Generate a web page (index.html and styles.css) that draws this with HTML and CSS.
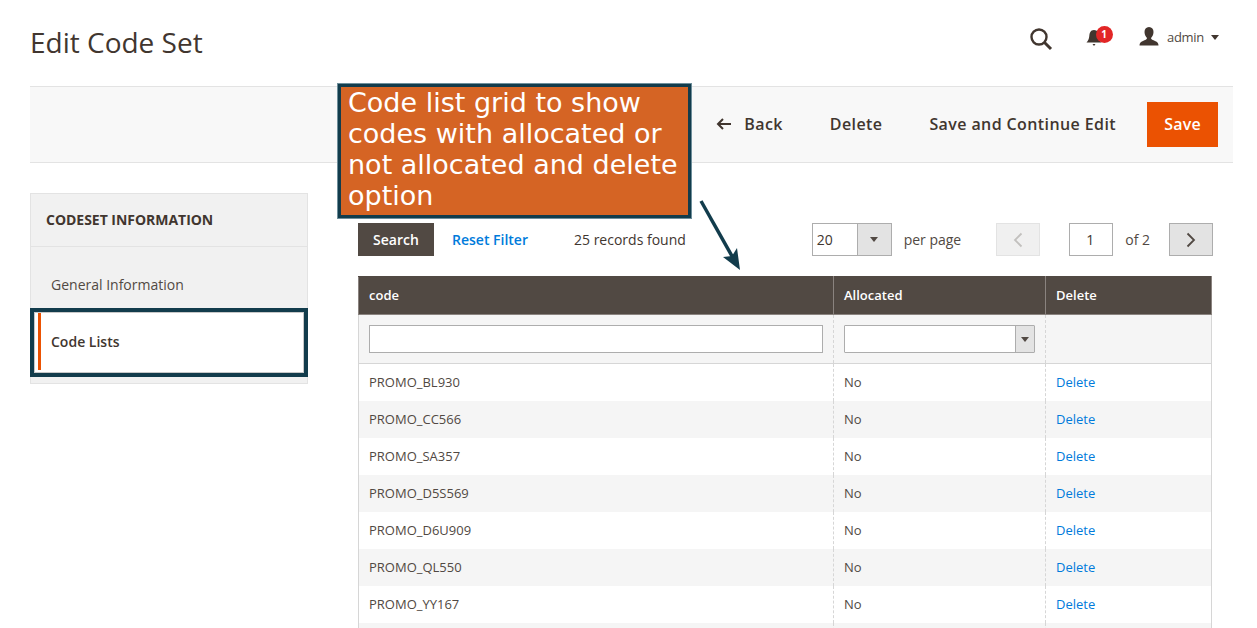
FILE: index.html
```html
<!DOCTYPE html>
<html lang="en">
<head>
	<title>Edit Code Set</title>
	<link rel="stylesheet" href="styles.css">
</head>
<body>
	<!-- Page header -->
	<header class="page-header">
		<h1>Edit Code Set</h1>
		<div class="actions-top">
			<svg class="icon-search" width="24" height="24" viewBox="0 0 24 24"><circle cx="10" cy="10" r="7.5" fill="none" stroke="#41362f" stroke-width="2.4"/><path d="M15.5 15.5 L22 22" stroke="#41362f" stroke-width="3" fill="none"/></svg>
			<div class="notify">
				<svg width="18" height="20" viewBox="0 0 18 20"><path d="M9 2 C5.5 2 4.5 5 4.3 8 C4.1 11 3 13 1.5 14.5 L16.5 14.5 C15 13 13.900 11 13.700 8 C13.500 5 12.500 2 9 2 Z M7.500 16 L10.500 16 L9 18 Z" fill="#41362f"/></svg>
				<span class="badge">1</span>
			</div>
			<div class="user">
				<svg width="20" height="20" viewBox="0 0 20 20"><path d="M10 0 C13 0 14.500 2.200 14.500 5 C14.500 8 13 10 12 11 C12 12.500 14 13 16 14 C18.500 15 19.500 16 19.500 18.500 L0.500 18.500 C0.500 16 1.500 15 4 14 C6 13 8 12.500 8 11 C7 10 5.500 8 5.500 5 C5.500 2.200 7 0 10 0 Z" fill="#41362f"/></svg>
				<span>admin</span>
				<i class="caret"></i>
			</div>
		</div>
	</header>

	<!-- Toolbar -->
	<div class="toolbar">
		<button type="button" class="tool-btn back"><svg width="16" height="12" viewBox="0 0 16 12"><path d="M15 6 H2 M7 1 L2 6 L7 11" fill="none" stroke="#41362f" stroke-width="2"/></svg>Back</button>
		<button type="button" class="tool-btn">Delete</button>
		<button type="button" class="tool-btn">Save and Continue Edit</button>
		<button type="button" class="save-btn">Save</button>
	</div>

	<div class="content">
		<aside class="sidebar">
			<div class="side-title">CODESET INFORMATION</div>
			<div class="side-item">General Information</div>
			<div class="side-active">
				<div class="side-active-label">Code Lists</div>
			</div>
		</aside>

		<main class="main">
			<div class="grid-controls">
				<button type="button" class="search-btn">Search</button>
				<a class="reset-link">Reset Filter</a>
				<span class="records">25 records found</span>
				<div class="pager">
					<div class="select-box">
						<span class="select-val">20</span>
						<span class="select-arrow"><i class="caret"></i></span>
					</div>
					<span class="per-page">per page</span>
					<button type="button" class="page-btn disabled"><svg width="10" height="16" viewBox="0 0 10 16"><path d="M8.500 1.500 L2 8 L8.500 14.500" fill="none" stroke="#c2c0be" stroke-width="1.800"/></svg></button>
					<div class="page-input">1</div>
					<span class="page-of">of 2</span>
					<button type="button" class="page-btn"><svg width="10" height="16" viewBox="0 0 10 16"><path d="M1.500 1.500 L8 8 L1.500 14.500" fill="none" stroke="#514943" stroke-width="1.800"/></svg></button>
				</div>
			</div>

			<table class="grid">
				<thead>
					<tr><th class="col-code">code</th><th class="col-alloc">Allocated</th><th>Delete</th></tr>
				</thead>
				<tbody>
					<tr class="filters">
						<td><div class="filter-input"></div></td>
						<td><div class="filter-select"><span class="filter-arrow"><i class="caret"></i></span></div></td>
						<td></td>
					</tr>
					<tr><td>PROMO_BL930</td><td>No</td><td><a>Delete</a></td></tr>
					<tr><td>PROMO_CC566</td><td>No</td><td><a>Delete</a></td></tr>
					<tr><td>PROMO_SA357</td><td>No</td><td><a>Delete</a></td></tr>
					<tr><td>PROMO_D5S569</td><td>No</td><td><a>Delete</a></td></tr>
					<tr><td>PROMO_D6U909</td><td>No</td><td><a>Delete</a></td></tr>
					<tr><td>PROMO_QL550</td><td>No</td><td><a>Delete</a></td></tr>
					<tr><td>PROMO_YY167</td><td>No</td><td><a>Delete</a></td></tr>
					<tr><td></td><td></td><td></td></tr>
				</tbody>
			</table>
		</main>
	</div>

	<!-- annotation laid over the page -->
	<div class="callout">Code list grid to show codes with allocated or not allocated and delete option</div>
	<svg class="arrow" width="44" height="74" viewBox="0 0 44 74"><path d="M2 2 L38 66" stroke="#123c4c" stroke-width="3.500" fill="none"/><path d="M41 71 L24 58 L33 57 L38 49 Z" fill="#123c4c"/></svg>
</body>
</html>
```

FILE: styles.css
```css
html {
	overflow: hidden;
}

body {
	margin: 0;
	height: 628px;
	overflow: hidden;
	font: normal 14px "Open Sans", sans-serif;
	color: #41362f;
	background: #fff;
	position: relative;
}

a {
	color: #007bdb;
}

button {
	font-family: "Open Sans", sans-serif;
	cursor: pointer;
}

.caret {
	display: block;
	width: 0;
	height: 0;
	border-left: 4.5px solid transparent;
	border-right: 4.5px solid transparent;
	border-top: 5px solid #514943;
}

/* header */
.page-header {
	height: 86px;
	box-sizing: border-box;
	padding: 0 38px 0 30px;
	display: flex;
	justify-content: space-between;
}

.page-header h1 {
	margin: 21px 0 0;
	font-size: 28px;
	font-weight: 400;
	line-height: 42px;
	color: #41362f;
}

.actions-top {
	display: flex;
	align-items: flex-start;
	padding-top: 26px;
}

.icon-search {
	margin: 1px 0 0 0;
}

.notify {
	position: relative;
	margin: 2px 0 0 32px;
	width: 18px;
	height: 20px;
}

.badge {
	position: absolute;
	left: 11px;
	top: -2px;
	width: 17px;
	height: 17px;
	border-radius: 50%;
	background: #e22626;
	color: #fff;
	font-size: 10px;
	font-weight: 700;
	line-height: 17px;
	text-align: center;
}

.user {
	display: flex;
	align-items: center;
	margin: 1px 0 0 36px;
	font-size: 13px;
	letter-spacing: -0.3px;
	color: #514943;
	height: 20px;
}

.user span {
	margin-left: 8.500px;
}

.user .caret {
	margin-left: 7px;
	border-top-color: #41362f;
}

/* toolbar */
.toolbar {
	margin: 0 24px 0 30px;
	height: 77px;
	box-sizing: border-box;
	background: #f8f8f8;
	border-top: 1px solid #e3e3e3;
	border-bottom: 1px solid #e3e3e3;
	padding: 0 15px 0 0;
	display: flex;
	justify-content: flex-end;
	align-items: center;
}

.tool-btn {
	background: none;
	border: none;
	padding: 0 0 2px;
	margin-right: 31px;
	font-size: 16px;
	font-weight: 600;
	color: #41362f;
	letter-spacing: 0.4px;
	display: flex;
	align-items: center;
}

.tool-btn.back svg {
	margin-right: 12px;
}

.tool-btn + .tool-btn {
	margin-left: 16px;
}

.save-btn {
	width: 71px;
	height: 45px;
	padding: 0 0 2px;
	background: #eb5202;
	border: none;
	color: #fff;
	font-size: 16px;
	font-weight: 600;
	letter-spacing: 0.2px;
}

/* content */
.content {
	display: flex;
	padding: 30px 0 0 30px;
}

.sidebar {
	width: 278px;
	height: 191px;
	box-sizing: border-box;
	margin-right: 50px;
	background: #f1f1f1;
	border: 1px solid #e3e3e3;
	flex-shrink: 0;
}

.side-title {
	height: 53px;
	box-sizing: border-box;
	padding-left: 15px;
	line-height: 52px;
	font-size: 14px;
	font-weight: 700;
	letter-spacing: -0.03px;
	color: #41362f;
	border-bottom: 1px solid #e3e3e3;
}

.side-item {
	height: 56px;
	padding: 9px 0 0 20px;
	line-height: 57px;
	font-size: 14px;
	color: #514943;
}

.side-active {
	height: 61px;
	box-sizing: border-box;
	margin: 0 3px;
	padding-left: 3px;
	background: #fff;
	border: 1px solid #c8c8c8;
	outline: 4px solid #123c4c;
}

.side-active-label {
	height: 57px;
	line-height: 58px;
	padding-left: 10px;
	border-left: 3px solid #eb5202;
	font-weight: 600;
	color: #41362f;
}

.main {
	width: 854px;
	padding-top: 30px;
}

.grid-controls {
	display: flex;
	align-items: center;
	height: 33px;
	margin-bottom: 20px;
}

.search-btn {
	width: 76px;
	height: 33px;
	background: #514943;
	border: none;
	color: #fff;
	font-size: 14px;
	font-weight: 600;
}

.reset-link {
	margin-left: 18px;
	font-weight: 600;
	font-size: 14px;
}

.records {
	margin-left: 46px;
	color: #41362f;
}

.pager {
	margin-left: auto;
	display: flex;
	align-items: center;
	margin-right: -1px;
}

.select-box {
	width: 80px;
	height: 33px;
	box-sizing: border-box;
	border: 1px solid #adadad;
	display: flex;
}

.select-val {
	flex: 1;
	padding-left: 4px;
	line-height: 31px;
}

.select-arrow {
	width: 33px;
	background: #e3e3e3;
	border-left: 1px solid #adadad;
	display: flex;
	align-items: center;
	justify-content: center;
}

.per-page {
	margin: 0 35px 0 12px;
	color: #514943;
}

.page-btn {
	width: 44px;
	height: 33px;
	box-sizing: border-box;
	padding: 0;
	background: #e3e3e3;
	border: 1px solid #adadad;
	display: flex;
	align-items: center;
	justify-content: center;
}

.page-btn.disabled {
	background: #f0f0f0;
	border-color: #e3e3e3;
}

.page-input {
	width: 44px;
	height: 33px;
	box-sizing: border-box;
	margin-left: 29px;
	padding-right: 2px;
	border: 1px solid #adadad;
	line-height: 31px;
	text-align: center;
	color: #41362f;
}

.page-of {
	margin: 0 19px 0 12px;
	color: #514943;
}

/* grid */
.grid {
	width: 854px;
	border-collapse: collapse;
	table-layout: fixed;
	font-size: 13px;
	color: #514943;
}

.col-code {
	width: 475px;
}

.col-alloc {
	width: 212px;
}

.grid th {
	height: 38px;
	box-sizing: border-box;
	padding: 0 10px 2px;
	background: #514943;
	color: #fff;
	font-size: 13px;
	font-weight: 600;
	text-align: left;
	border: 1px solid #8a837f;
	border-top-color: #514943;
}

.grid th:first-child {
	border-left-color: #8a837f;
}

.grid th:last-child {
	border-right-color: #8a837f;
}

.grid td {
	height: 37px;
	box-sizing: border-box;
	padding: 0 10px;
	border-left: 1px dashed #d6d6d6;
	border-right: 1px dashed #d6d6d6;
}

.grid td:first-child {
	border-left: 1px solid #d6d6d6;
}

.grid td:last-child {
	border-right: 1px solid #d6d6d6;
}

.grid tbody tr:nth-child(odd) td {
	background: #f5f5f5;
}

.grid tbody tr:nth-child(2) td {
	background: #fff;
}

.grid .filters td {
	height: 49px;
	background: #f5f5f5;
	border-bottom: 1px solid #d6d6d6;
}

.filter-input {
	height: 28px;
	box-sizing: border-box;
	background: #fff;
	border: 1px solid #adadad;
}

.filter-select {
	height: 28px;
	box-sizing: border-box;
	background: #fff;
	border: 1px solid #adadad;
	border-radius: 1px;
	display: flex;
	justify-content: flex-end;
}

.filter-arrow {
	width: 18px;
	background: #e3e3e3;
	border-left: 1px solid #adadad;
	display: flex;
	align-items: center;
	justify-content: center;
}

/* annotation */
.callout {
	position: absolute;
	left: 338px;
	top: 84px;
	width: 353px;
	height: 134px;
	box-sizing: border-box;
	padding: 0 6px 0 7px;
	background: #d56424;
	border: 3px solid #123c4c;
	outline: 1px solid #6f8f9b;
	color: #fff;
	font: 27px/31px "DejaVu Sans", sans-serif;
}

.arrow {
	position: absolute;
	left: 699px;
	top: 199px;
}
```
